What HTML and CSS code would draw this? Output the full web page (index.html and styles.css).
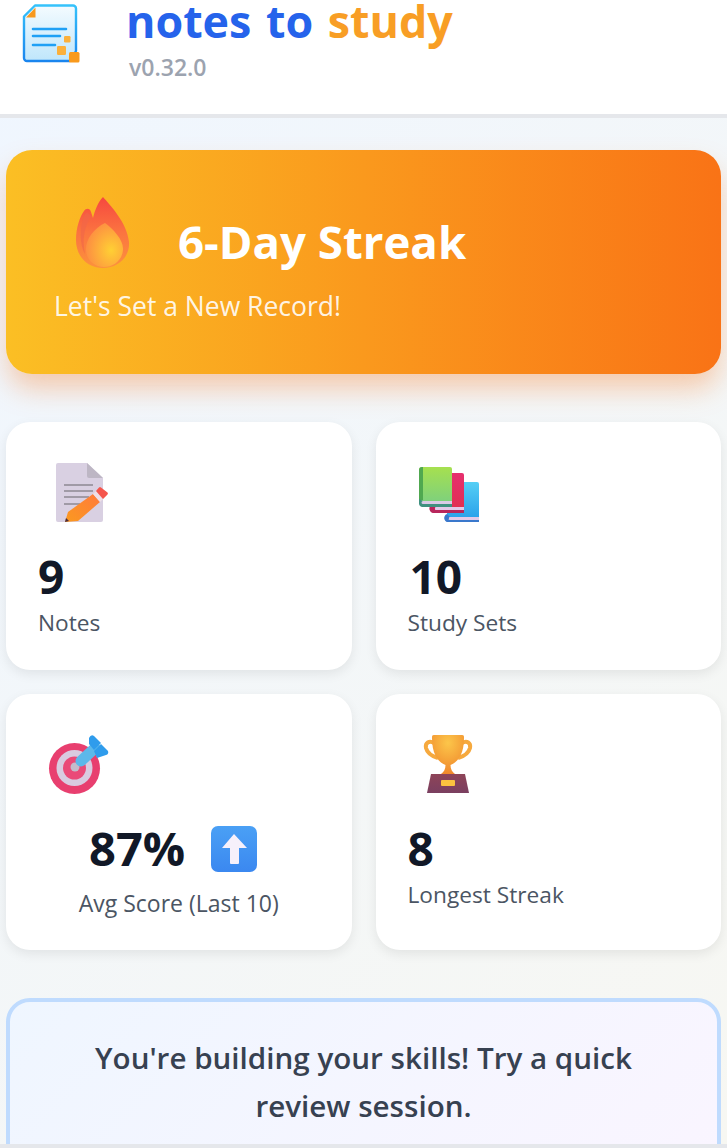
FILE: index.html
```html
<!DOCTYPE html>
<html lang="en">
    <head>
        <meta charset="UTF-8" />
        <meta name="viewport" content="width=device-width, initial-scale=1.0" />
        <title>notes to study</title>
        <link rel="stylesheet" href="styles.css">
    </head>
    <body>
        <header class="topbar">
            <svg class="logo" viewBox="0 0 58 60" width="58" height="60">
                <defs>
                    <linearGradient id="logo-fill" x1="0" y1="0" x2="0" y2="1">
                        <stop offset="0" stop-color="#f4fbff" />
                        <stop offset="1" stop-color="#bfe6fb" />
                    </linearGradient>
                    <linearGradient id="logo-line" x1="0" y1="0" x2="0" y2="1">
                        <stop offset="0" stop-color="#35c2fb" />
                        <stop offset="1" stop-color="#1a85ee" />
                    </linearGradient>
                </defs>
                <path d="M13 1.5H51a3 3 0 0 1 3 3V47l-6 10H5a3 3 0 0 1-3-3V12.5z" fill="url(#logo-fill)" stroke="url(#logo-line)" stroke-width="2.4" stroke-linejoin="round" />
                <path d="M4 13.5L13.5 3.5V13.5z" fill="#f7991f" />
                <path d="M11 25H44M11 32H38M11 41H33" stroke="#1fa0f5" stroke-width="2.6" stroke-linecap="round" fill="none" />
                <rect x="42" y="32" width="6.5" height="6.5" rx="1.2" fill="#fbb03b" />
                <rect x="35" y="42" width="9" height="9" rx="1.2" fill="#fbb03b" />
                <rect x="47" y="48" width="10.5" height="10.5" rx="1.5" fill="#f99a1c" />
            </svg>
            <div class="brand">
                <div class="brand-name"><span class="blue">notes to</span> <span class="orange">study</span></div>
                <div class="version">v0.32.0</div>
            </div>
        </header>
        <main>
            <section class="streak">
                <div class="streak-head">
                    <svg class="flame" viewBox="0 0 56 72" width="56" height="72">
                        <defs>
                            <linearGradient id="flame-out" x1="0.5" y1="0" x2="0.5" y2="1">
                                <stop offset="0" stop-color="#f6483f" />
                                <stop offset="0.5" stop-color="#fb7440" />
                                <stop offset="1" stop-color="#fc923c" />
                            </linearGradient>
                            <radialGradient id="flame-in" cx="0.68" cy="0.62" r="0.7">
                                <stop offset="0" stop-color="#ffd034" />
                                <stop offset="1" stop-color="#fd8c42" />
                            </radialGradient>
                        </defs>
                        <path d="M28 1C34 8 52 26 54 46 55 62 42 72 28 72 12 72 1 60 1 44 1 32 5 20 9 15 11 12 15 12 16 16L18 22C20 14 23 6 28 1z" fill="url(#flame-out)" />
                        <path d="M9 20C5 30 4 48 10 58 7 44 9 32 16 20 13 16 11 16 9 20z" fill="#f0664a" opacity="0.6" />
                        <path d="M30 27C38 33 49 44 48 54 47 65 38 71 29 71 19 71 12 64 11 55 10 44 19 32 30 27z" fill="url(#flame-in)" />
                    </svg>
                    <h2>6-Day Streak</h2>
                </div>
                <p>Let's Set a New Record!</p>
            </section>
            <section class="stats">
                <div class="stat">
                    <svg class="stat-icon" viewBox="0 0 60 60" width="60" height="60">
                        <defs>
                            <linearGradient id="pencil" x1="0" y1="1" x2="1" y2="0">
                                <stop offset="0" stop-color="#fb9a1f" />
                                <stop offset="1" stop-color="#ff7a3c" />
                            </linearGradient>
                        </defs>
                        <path d="M4 1H33L49 16V58a2 2 0 0 1-2 2H4a2 2 0 0 1-2-2V3a2 2 0 0 1 2-2z" fill="#d9d0e2" />
                        <path d="M33 1L49 16H35a2 2 0 0 1-2-2z" fill="#bdb6c4" />
                        <path d="M10 23H39M10 29H39M10 35H35M10 42H26" stroke="#a09aa6" stroke-width="2" fill="none" />
                        <path d="M14 50L39 32 46 40 24 59 11 60z" fill="url(#pencil)" />
                        <path d="M39 32L46 40 49 37 42 29z" fill="#f0dfe6" />
                        <path d="M42 29L45 25.500a1.500 1.500 0 0 1 2 0L53.500 30.500a1.500 1.500 0 0 1 0 2L49 37z" fill="#f5554c" />
                        <path d="M12 56L11 60 15 59z" fill="#4a2c3e" />
                    </svg>
                    <div class="stat-value">9</div>
                    <div class="stat-label">Notes</div>
                </div>
                <div class="stat">
                    <svg class="stat-icon books" viewBox="0 0 60 60" width="60" height="60">
                        <defs>
                            <linearGradient id="book-green" x1="0" y1="0" x2="0" y2="1">
                                <stop offset="0" stop-color="#a6e04f" />
                                <stop offset="1" stop-color="#7dd07e" />
                            </linearGradient>
                            <linearGradient id="book-red" x1="0" y1="0" x2="0" y2="1">
                                <stop offset="0" stop-color="#e62f6f" />
                                <stop offset="1" stop-color="#e03050" />
                            </linearGradient>
                            <linearGradient id="book-blue" x1="0" y1="0" x2="0" y2="1">
                                <stop offset="0" stop-color="#55cff5" />
                                <stop offset="1" stop-color="#2aa0ea" />
                            </linearGradient>
                        </defs>
                        <path d="M28 20H58a2 2 0 0 1 2 2V57H28z" fill="url(#book-blue)" />
                        <path d="M30 55H60V58H30z" fill="#e3c9e8" />
                        <path d="M28 52a3 3 0 0 0 3 8H60V58H31a1.500 1.500 0 0 1 0-3z" fill="#3a78cc" />
                        <path d="M15 11H43a2 2 0 0 1 2 2V48H14z" fill="url(#book-red)" />
                        <path d="M16 45H45V48H16z" fill="#e3c9e8" />
                        <path d="M14 42a3 3 0 0 0 2 9H45V48H17a1.500 1.500 0 0 1 0-3z" fill="#b8265c" />
                        <path d="M3 5H31a2 2 0 0 1 2 2V41H0V8a3 3 0 0 1 3-3z" fill="url(#book-green)" />
                        <path d="M0 8a3 3 0 0 1 3-3H4V38H0z" fill="#50a850" />
                        <path d="M2 39H33V42H2z" fill="#d9cbe6" />
                        <path d="M0 37V41a4 4 0 0 0 3 4H33V42H4a1.500 1.500 0 0 1 0-3z" fill="#3f9180" />
                    </svg>
                    <div class="stat-value shifted">10</div>
                    <div class="stat-label">Study Sets</div>
                </div>
                <div class="stat">
                    <svg class="stat-icon target" viewBox="0 0 62 60" width="62" height="60">
                        <circle cx="26.500" cy="34.500" r="25.500" fill="#e83f6f" />
                        <circle cx="26.500" cy="34" r="18" fill="#d9cbe0" />
                        <circle cx="26.500" cy="34" r="11.500" fill="#ea4a78" />
                        <circle cx="27" cy="33" r="4.500" fill="#c4bccb" />
                        <path d="M33 27L47 14" stroke="#5cb8ea" stroke-width="11" stroke-linecap="round" />
                        <path d="M41 10V4Q43 0 46 2L53 9 46 16z" fill="#2f9cec" />
                        <path d="M46 17L53 10 60 17Q61 20 58 21L49 24z" fill="#2f9cec" />
                    </svg>
                    <div class="stat-center">
                        <div class="stat-value score">87% <svg class="up-arrow" viewBox="0 0 48 48" width="48" height="48">
                            <defs>
                                <linearGradient id="up-fill" x1="0" y1="0" x2="0" y2="1">
                                    <stop offset="0" stop-color="#4aa0f5" />
                                    <stop offset="1" stop-color="#3b88f0" />
                                </linearGradient>
                            </defs>
                            <rect x="1" y="1" width="46" height="46" rx="7" fill="url(#up-fill)" />
                            <path d="M24 9L37 23H29V38a1 1 0 0 1-1 1H21a1 1 0 0 1-1-1V23H12z" fill="#f6f0fb" />
                        </svg></div>
                        <div class="stat-label spaced">Avg Score (Last 10)</div>
                    </div>
                </div>
                <div class="stat">
                    <svg class="stat-icon trophy" viewBox="0 0 60 60" width="60" height="60">
                        <defs>
                            <radialGradient id="cup" cx="0.5" cy="0.2" r="0.8">
                                <stop offset="0" stop-color="#fcc64a" />
                                <stop offset="1" stop-color="#f0882c" />
                            </radialGradient>
                            <linearGradient id="base" x1="0" y1="0" x2="0" y2="1">
                                <stop offset="0" stop-color="#8e4458" />
                                <stop offset="1" stop-color="#7a3f60" />
                            </linearGradient>
                        </defs>
                        <path d="M14 9C9 6 5 9 6 14 7 18 11 22 18 24M42 9C47 6 51 9 50 14 49 18 45 22 38 24" stroke="#f6a93e" stroke-width="4" fill="none" />
                        <path d="M14 1H42C44 1 44 2 44 4 44 20 38 28 30.500 31 30.500 35 32 38 35 40H21C24 38 25.500 35 25.500 31 18 28 12 20 12 4 12 2 12 1 14 1z" fill="url(#cup)" />
                        <path d="M11 40H45L49 59H7z" fill="url(#base)" />
                        <rect x="21" y="46" width="14" height="6" rx="1" fill="#fbc13f" />
                    </svg>
                    <div class="stat-value">8</div>
                    <div class="stat-label">Longest Streak</div>
                </div>
            </section>
            <section class="tip">
                <p>You're building your skills! Try a quick review session.</p>
            </section>
        </main>
        <div class="bottom-edge"></div>
    </body>
</html>
```

FILE: styles.css
```css
* {
    box-sizing: border-box;
}
html,
body {
    height: 100%;
}
body {
    margin: 0;
    display: flex;
    flex-direction: column;
    overflow: hidden;
    background: linear-gradient(135deg, #eff6ff, #f7f7f2);
    color: #111827;
    font-family: "Open Sans", "Noto Sans", sans-serif;
}
.topbar {
    flex: none;
    display: flex;
    height: 118px;
    padding-left: 22px;
    background-color: #fff;
    border-bottom: 4px solid #e5e7eb;
}
.logo {
    margin-top: 4px;
}
.brand {
    margin-left: 46px;
}
.brand-name {
    font-size: 44.8px;
    line-height: 41px;
    font-weight: 700;
    word-spacing: 3px;
}
.blue {
    color: #2563eb;
}
.orange {
    color: #f89e25;
}
.version {
    margin: 12px 0 0 3px;
    font-size: 23px;
    line-height: 28px;
    font-weight: 600;
    color: #9ca3af;
}
main {
    flex: 1;
    min-height: 0;
    overflow: hidden;
    padding: 32px 6px 0;
}
.streak {
    height: 224px;
    padding: 46px 48px 0;
    border-radius: 26px;
    background: linear-gradient(90deg, #fbbf24, #f97316);
    box-shadow: 0 16px 28px -2px rgba(249, 115, 22, 0.35);
    color: #fff;
}
.streak-head {
    display: flex;
    align-items: flex-start;
    gap: 47px;
    padding-left: 21px;
}
.streak h2 {
    margin: 9px 0 0;
    font-size: 45.6px;
    line-height: 72px;
    font-weight: 700;
}
.streak p {
    margin: 13px 0 0;
    font-size: 26.5px;
    line-height: 32px;
    color: rgba(255, 255, 255, 0.9);
}
.stats {
    display: grid;
    grid-template-columns: 1fr 1fr;
    gap: 24px;
    margin-top: 48px;
}
.stat {
    padding: 40px 32px 0;
    border-radius: 24px;
    background-color: #fff;
    box-shadow: 0 4px 12px rgba(0, 0, 0, 0.08);
}
.stat:nth-child(1),
.stat:nth-child(2) {
    height: 248px;
}
.stat:nth-child(3),
.stat:nth-child(4) {
    height: 256px;
}
.stat-icon {
    display: block;
    margin-left: 16px;
}
.stat-icon.books {
    margin-left: 11px;
}
.stat-icon.target {
    margin-left: 10px;
}
.stat-icon.trophy {
    margin-left: 12px;
}
.stat-value {
    margin-top: 23px;
    font-size: 46px;
    line-height: 62px;
    font-weight: 700;
}
.stat-value.score {
    font-size: 47px;
}
.shifted {
    margin-left: 2px;
}
.stat-label {
    margin-top: 1px;
    font-size: 22.7px;
    line-height: 30px;
    color: #4b5563;
}
.stat-label.spaced {
    margin-top: 9px;
    font-size: 23px;
}
.stat-center {
    text-align: center;
}
.up-arrow {
    margin: 0 10px 0 13px;
    vertical-align: -7px;
}
.tip {
    height: 200px;
    margin-top: 48px;
    padding: 32px 60px 0;
    border: 4px solid #bfdbfe;
    border-radius: 24px;
    background: linear-gradient(135deg, #eff6ff, #faf5ff);
}
.tip p {
    margin: 0;
    text-align: center;
    font-size: 29.6px;
    line-height: 48px;
    font-weight: 600;
    color: #374151;
}
.bottom-edge {
    flex: none;
    height: 4px;
    background-color: #e5e7eb;
}
```
